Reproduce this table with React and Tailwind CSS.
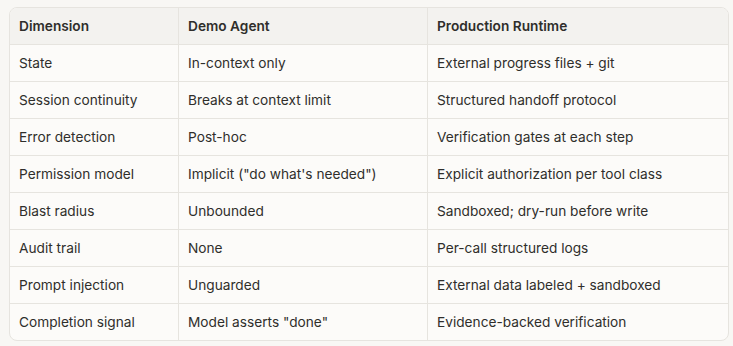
const rows = [
  ["State", "In-context only", "External progress files + git"],
  ["Session continuity", "Breaks at context limit", "Structured handoff protocol"],
  ["Error detection", "Post-hoc", "Verification gates at each step"],
  ["Permission model", "Implicit (\"do what's needed\")", "Explicit authorization per tool class"],
  ["Blast radius", "Unbounded", "Sandboxed; dry-run before write"],
  ["Audit trail", "None", "Per-call structured logs"],
  ["Prompt injection", "Unguarded", "External data labeled + sandboxed"],
  ["Completion signal", "Model asserts \"done\"", "Evidence-backed verification"],
];

const App = () => {
  return (
    <div className="w-[733px] h-[346px] bg-[#f8f7f4] pt-[7px] pl-[9px] font-['Inter',sans-serif] text-[13.7px] text-[#2f2e2b]">
      <div className="w-[720px] rounded-lg border border-[#e6e4df] bg-[#fcfbf9] overflow-hidden">
        <div className="grid grid-cols-[169px_249px_1fr] bg-[#f3f2ef] font-semibold h-[36px]">
          <div className="pl-[9px] flex items-center border-r border-[#e6e4df]">Dimension</div>
          <div className="pl-[9px] flex items-center border-r border-[#e6e4df]">Demo Agent</div>
          <div className="pl-[9px] flex items-center">Production Runtime</div>
        </div>
        {rows.map((r, i) => (
          <div key={i} className="grid grid-cols-[169px_249px_1fr] h-[37px] border-t border-[#e6e4df]">
            <div className="pl-[9px] flex items-center border-r border-[#e6e4df]">{r[0]}</div>
            <div className="pl-[9px] flex items-center border-r border-[#e6e4df]">{r[1]}</div>
            <div className="pl-[9px] flex items-center">{r[2]}</div>
          </div>
        ))}
      </div>
    </div>
  );
};

export default App;
